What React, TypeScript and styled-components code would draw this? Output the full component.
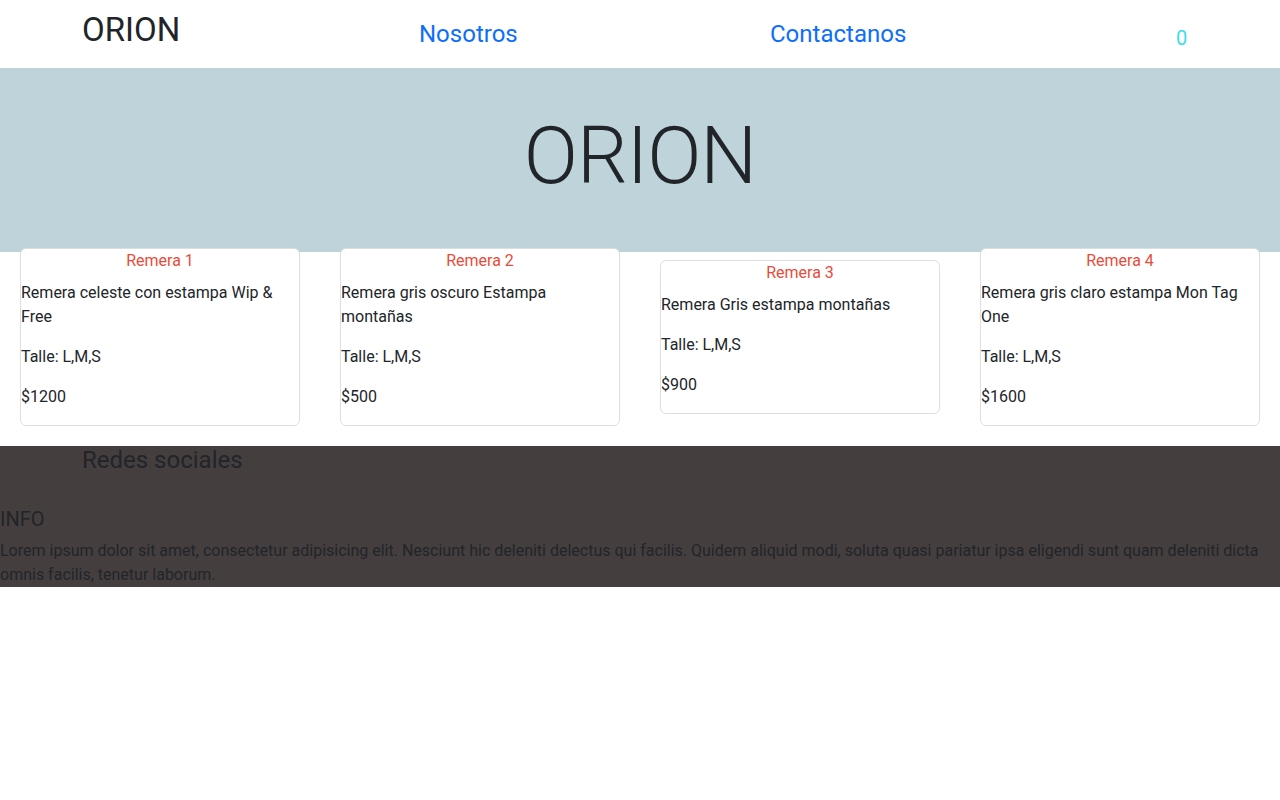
import React from 'react';
import styled, { createGlobalStyle } from 'styled-components';

const GlobalStyle = createGlobalStyle`
  body {
    margin: 0;
    font-family: Roboto, "Liberation Sans", sans-serif;
    font-size: 16px;
    line-height: 1.5;
    color: #212529;
    background: #ffffff;
  }
`;

const Nav = styled.nav`
  display: grid;
  grid-template-columns: 337px 351px 406px auto;
  align-items: center;
  height: 68px;
  padding-left: 82px;
`;

const Brand = styled.span`
  font-size: 33px;
  font-weight: 400;
  line-height: 1.2;
  margin-top: -8px;
`;

const NavLink = styled.a`
  color: #0d6efd;
  font-size: 24px;
  text-decoration: none;
  line-height: 1.5;
`;

const CartCount = styled.span`
  color: #3cdcec;
  font-size: 20px;
  margin-top: 8px;
`;

const Hero = styled.header`
  background: #bed3da;
  padding: 40px 0 48px;
  text-align: center;
`;

const HeroTitle = styled.h1`
  margin: 0;
  font-size: 80px;
  font-weight: 300;
  line-height: 1.2;
  letter-spacing: -1px;
`;

const CardRow = styled.section`
  display: grid;
  grid-template-columns: repeat(4, 1fr);
  align-items: center;
  margin: -4px 0 20px;
`;

const Card = styled.article`
  justify-self: center;
  width: 280px;
  box-sizing: border-box;
  border: 1px solid #dcdfe2;
  border-radius: 6px;
  background: #ffffff;
`;

const CardTitle = styled.h3`
  margin: 0 0 8px;
  color: #e74c3c;
  font-size: 16px;
  font-weight: 400;
  line-height: 24px;
  text-align: center;
`;

const CardText = styled.p`
  margin: 0 0 16px;
`;

const Footer = styled.footer`
  background: #453e3e;
`;

const SocialTitle = styled.h4`
  margin: 0 0 32px;
  padding-left: 82px;
  font-size: 24px;
  font-weight: 400;
  line-height: 1.2;
`;

const InfoTitle = styled.h5`
  margin: 0 0 8px;
  font-size: 20px;
  font-weight: 400;
  line-height: 1.2;
`;

const InfoText = styled.p`
  margin: 0;
`;

const products = [
  { name: 'Remera 1', desc: 'Remera celeste con estampa Wip & Free', price: '$1200' },
  { name: 'Remera 2', desc: 'Remera gris oscuro Estampa montañas', price: '$500' },
  { name: 'Remera 3', desc: 'Remera Gris estampa montañas', price: '$900' },
  { name: 'Remera 4', desc: 'Remera gris claro estampa Mon Tag One', price: '$1600' },
];

export default function App() {
  return (
    <>
      <GlobalStyle />
      <Nav>
        <Brand>ORION</Brand>
        <NavLink href="#">Nosotros</NavLink>
        <NavLink href="#">Contactanos</NavLink>
        <CartCount>0</CartCount>
      </Nav>
      <Hero>
        <HeroTitle>ORION</HeroTitle>
      </Hero>
      <CardRow>
        {products.map((p) => (
          <Card key={p.name}>
            <CardTitle>{p.name}</CardTitle>
            <CardText>{p.desc}</CardText>
            <CardText>Talle: L,M,S</CardText>
            <CardText>{p.price}</CardText>
          </Card>
        ))}
      </CardRow>
      <Footer>
        <SocialTitle>Redes sociales</SocialTitle>
        <InfoTitle>INFO</InfoTitle>
        <InfoText>
          Lorem ipsum dolor sit amet, consectetur adipisicing elit. Nesciunt hic deleniti delectus qui facilis. Quidem
          aliquid modi, soluta quasi pariatur ipsa eligendi sunt quam deleniti dicta omnis facilis, tenetur laborum.
        </InfoText>
      </Footer>
    </>
  );
}
